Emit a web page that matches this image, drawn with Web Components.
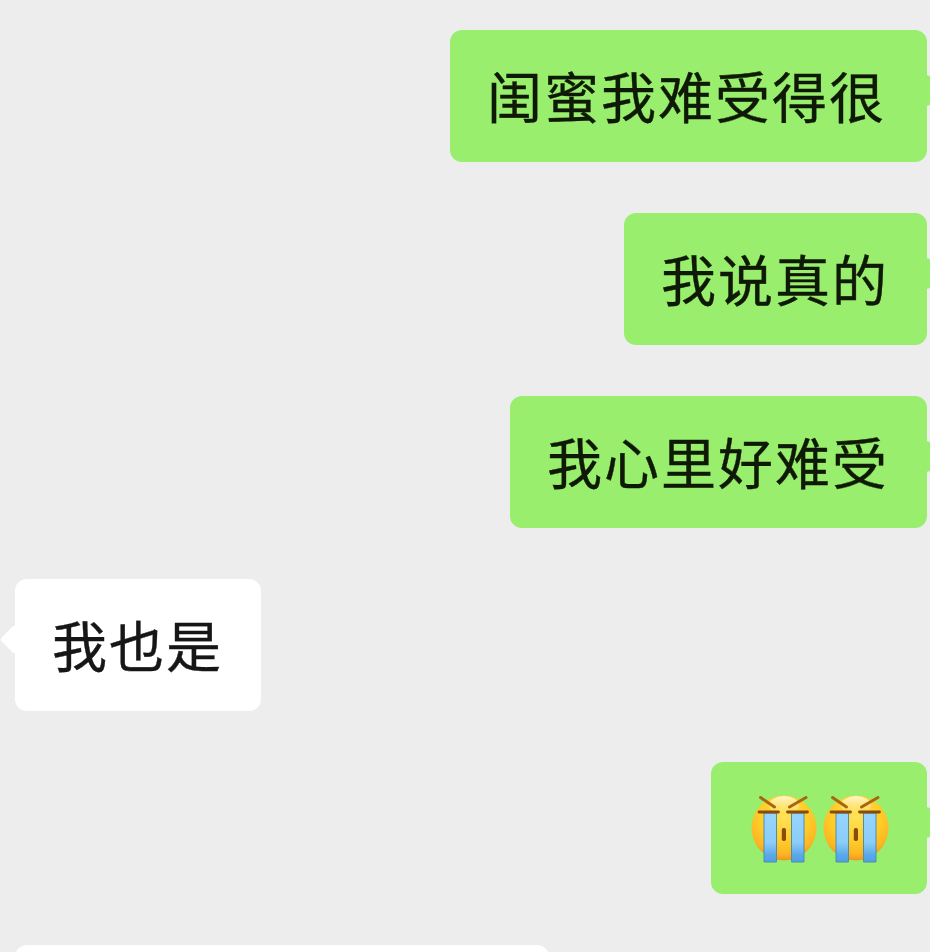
<!DOCTYPE html>
<html lang="zh-CN">
<head>
<meta charset="utf-8">
<title>Chat</title>
<style>
  html, body {
    margin: 0;
    height: 100%;
    overflow: hidden;
    background: #ededed;
  }
</style>
</head>
<body>
<chat-page>
  <chat-bubble side="right" width="477">闺蜜我难受得很</chat-bubble>
  <chat-bubble side="right" width="303">我说真的</chat-bubble>
  <chat-bubble side="right" width="417">我心里好难受</chat-bubble>
  <chat-bubble side="left" width="246">我也是</chat-bubble>
  <chat-bubble side="right" width="216"><cry-emoji></cry-emoji><cry-emoji></cry-emoji></chat-bubble>
  <chat-bubble side="left" width="534"></chat-bubble>
</chat-page>

<script>
const pageTemplate = document.createElement('template');
pageTemplate.innerHTML = `
  <style>
  :host {
    display: flex;
    flex-direction: column;
    gap: 51px;
    box-sizing: border-box;
    width: 930px;
    height: 952px;
    padding: 30px 3px 0 15px;
    overflow: hidden;
    background: #ededed;
    font-family: "Noto Sans CJK SC", "Noto Sans", sans-serif;
  }
  </style>
  <slot></slot>
`;

class ChatPage extends HTMLElement {
  constructor() {
    super();
    this.attachShadow({ mode: 'open' }).appendChild(pageTemplate.content.cloneNode(true));
  }
}

const bubbleTemplate = document.createElement('template');
bubbleTemplate.innerHTML = `
  <style>
  :host {
    display: flex;
    flex-shrink: 0;
  }

  :host([side="right"]) {
    justify-content: flex-end;
  }

  .bubble {
    position: relative;
    box-sizing: border-box;
    display: flex;
    align-items: center;
    height: 132px;
    padding: 0 0 4px 37px;
    border-radius: 12px;
    font-size: 55px;
    letter-spacing: 2px;
    line-height: 1;
    white-space: nowrap;
    color: #161616;
    background: #fff;
    -webkit-text-stroke: 0.4px currentColor;
  }

  :host([side="right"]) .bubble {
    color: #0e1a06;
    background: #9aee6d;
  }

  .bubble::after {
    content: '';
    position: absolute;
    top: 49px;
    width: 23px;
    height: 23px;
    background: inherit;
    border-radius: 3px;
    transform: rotate(45deg);
  }

  :host([side="left"]) .bubble::after {
    top: 50px;
    width: 21px;
    height: 21px;
    left: -11px;
  }

  :host([side="right"]) .bubble::after {
    right: -11.5px;
  }
  </style>
  <div class="bubble"><slot></slot></div>
`;

class ChatBubble extends HTMLElement {
  constructor() {
    super();
    this.attachShadow({ mode: 'open' }).appendChild(bubbleTemplate.content.cloneNode(true));
    this.$bubble = this.shadowRoot.querySelector('.bubble');
  }

  connectedCallback() {
    if (this.hasAttribute('width')) {
      this.$bubble.style.width = this.getAttribute('width') + 'px';
    }
  }
}

let emojiCount = 0;

class CryEmoji extends HTMLElement {
  constructor() {
    super();
    const id = 'e' + emojiCount++;
    this.attachShadow({ mode: 'open' }).innerHTML = `
      <style>
      :host {
        display: block;
        width: 72px;
        height: 72px;
        margin-top: 4px;
      }
      svg {
        display: block;
      }
      </style>
      <svg width="72" height="72" viewBox="0 0 72 72" aria-hidden="true">
        <defs>
          <radialGradient id="${id}-face" cx="50%" cy="32%" r="68%">
            <stop offset="0" stop-color="#ffe35a"/>
            <stop offset="0.55" stop-color="#ffcd2a"/>
            <stop offset="0.85" stop-color="#fdb622"/>
            <stop offset="1" stop-color="#ec951c"/>
          </radialGradient>
          <linearGradient id="${id}-glow" x1="0" y1="0" x2="0" y2="1">
            <stop offset="0" stop-color="#fffbe0" stop-opacity="0.9"/>
            <stop offset="1" stop-color="#fff3b0" stop-opacity="0"/>
          </linearGradient>
          <linearGradient id="${id}-tear" x1="0" y1="0" x2="0" y2="1">
            <stop offset="0" stop-color="#95d5fd"/>
            <stop offset="0.6" stop-color="#8ccdf9"/>
            <stop offset="0.85" stop-color="#5aaaea"/>
            <stop offset="1" stop-color="#4f9fe4"/>
          </linearGradient>
        </defs>
        <circle cx="36" cy="36" r="32.500" fill="url(#${id}-face)"/>
        <ellipse cx="36" cy="13" rx="15" ry="9" fill="url(#${id}-glow)"/>
        <path d="M12.500 5.500 L26.500 15 M58 5.500 L41.500 15" stroke="#a8660f" stroke-width="3" stroke-linecap="round" fill="none"/>
        <path d="M16 21 H28.500 V70 H16 Z M43.500 21 H56 V70 H43.500 Z" fill="url(#${id}-tear)" stroke="#4e8eab" stroke-width="1"/>
        <path d="M11 20 H30.500 M39.500 20 H59.500" stroke="#8a4b08" stroke-width="2.800" stroke-linecap="round" fill="none"/>
        <rect x="33.800" y="36" width="4.200" height="13" rx="1.800" fill="#8a4b08"/>
      </svg>
    `;
  }
}

window.customElements.define('chat-page', ChatPage);
window.customElements.define('chat-bubble', ChatBubble);
window.customElements.define('cry-emoji', CryEmoji);
</script>
</body>
</html>
